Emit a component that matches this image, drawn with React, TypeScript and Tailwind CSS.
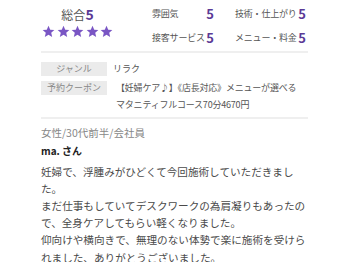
import React from "react";

const ratings = [
  { label: "雰囲気", score: 5 },
  { label: "技術・仕上がり", score: 5 },
  { label: "接客サービス", score: 5 },
  { label: "メニュー・料金", score: 5 },
];

function Star() {
  return (
    <svg width="13" height="13" viewBox="0 0 24 24" className="fill-[#7a56c4]">
      <path d="M12 1.5l3.2 7.1 7.6.7-5.8 5.1 1.8 7.6L12 18l-6.8 4 1.8-7.6-5.8-5.1 7.6-.7z" />
    </svg>
  );
}

export default function App() {
  return (
    <main className="w-[349px] h-[262px] overflow-hidden bg-white font-['Noto_Sans_CJK_JP',sans-serif]">
      <div className="ml-[41px] w-[267px]">
        {/* scores */}
        <div className="flex pt-[4px] h-[51px]">
          <div className="w-[73px] flex flex-col items-center">
            <div className="h-[20px] flex items-baseline justify-center leading-[20px]">
              <span className="text-[12px] text-[#555]">総合</span>
              <span className="text-[14px] font-bold text-[#5b3a96]">5</span>
            </div>
            <div className="flex gap-[1.5px] mt-[1px]">
              {[0, 1, 2, 3, 4].map((i) => (
                <Star key={i} />
              ))}
            </div>
          </div>
          <div className="ml-[38px] grid grid-cols-[62px_71px] gap-x-[21px]">
            {ratings.map((r) => (
              <div key={r.label} className="h-[20px] flex items-center justify-between whitespace-nowrap">
                <span className="text-[9px] text-[#555] tracking-[-0.2px]">{r.label}</span>
                <span className="text-[13px] font-bold text-[#5b3a96]">{r.score}</span>
              </div>
            ))}
          </div>
        </div>
        <div className="h-[2px] bg-[#efefef]" />

        {/* detail table */}
        <div className="pt-[7px] pb-[4px] flex flex-col gap-[2px] text-[9px] text-[#555]">
          <div className="flex items-start">
            <div className="w-[66px] h-[14px] mt-[1.5px] bg-[#ebebeb] text-[#888] flex items-center justify-center">
              ジャンル
            </div>
            <div className="ml-[6px] leading-[17px]">リラク</div>
          </div>
          <div className="flex items-start">
            <div className="w-[66px] h-[14px] mt-[1.5px] bg-[#ebebeb] text-[#888] flex items-center justify-center shrink-0">
              予約クーポン
            </div>
            <div className="ml-[9px] leading-[17px] tracking-[-0.2px]">
              【妊婦ケア♪】《店長対応》メニューが選べる
              <br />
              マタニティフルコース70分4670円
            </div>
          </div>
        </div>
        <div className="h-[2px] bg-[#efefef]" />

        {/* review */}
        <div className="pt-[5px]">
          <div className="text-[10.5px] leading-[18px] text-[#888]">女性/30代前半/会社員</div>
          <div className="text-[10px] leading-[18px] font-bold text-[#222]">ma. さん</div>
          <p className="mt-[2.5px] text-[10.6px] leading-[17.2px] text-[#4a4a4a]">
            妊婦で、浮腫みがひどくて今回施術していただきました。
            <br />
            まだ仕事もしていてデスクワークの為肩凝りもあったので、全身ケアしてもらい軽くなりました。
            <br />
            仰向けや横向きで、無理のない体勢で楽に施術を受けられました、ありがとうございました。
          </p>
        </div>
      </div>
    </main>
  );
}
